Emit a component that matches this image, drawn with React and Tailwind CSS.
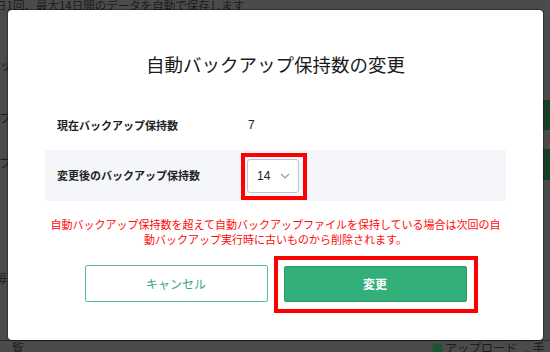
import React, { useState } from 'react';

const jp = { fontFamily: '"Noto Sans CJK JP", "Noto Sans", sans-serif' };

const BackgroundPage = () => (
  <>
    <p className="absolute left-[-5px] top-[-3px] text-[11.5px] leading-[16px] text-[#1c1c1c] whitespace-nowrap">
      日1回、最大14日間のデータを自動で保存します
    </p>
    <span className="absolute left-[0px] top-[57px] text-[12px] leading-[16px] text-[#1c1c1c]">ッ</span>
    <span className="absolute left-[-1px] top-[110px] text-[12px] leading-[16px] text-[#1c1c1c]">フ</span>
    <span className="absolute left-[-1px] top-[155px] text-[12px] leading-[16px] text-[#1c1c1c]">フ</span>
    <span className="absolute left-[-5px] top-[270px] text-[12px] leading-[16px] text-[#1c1c1c]">毎</span>
    <div className="absolute right-0 top-[100px] w-[30px] h-[30px] bg-[#173f26]" />
    <div className="absolute right-0 top-[149px] w-[30px] h-[31px] bg-[#173f26]" />
    <div className="absolute left-0 right-0 top-[340px] h-[1px] bg-[#2a2a2a]" />
    <span className="absolute left-[12px] top-[340px] text-[12px] leading-[16px] text-[#1c1c1c]">覧</span>
    <div className="absolute left-[432px] top-[341px] flex items-center gap-[2px]">
      <span className="w-[11px] h-[11px] rounded-full bg-[#1d5432]" />
      <span className="text-[12px] leading-[14px] text-[#1c1c1c]">アップロード</span>
    </div>
    <div className="absolute left-[523px] top-[341px] flex items-center gap-[2px]">
      <span className="w-[11px] h-[11px] rounded-full bg-[#1d5432]" />
      <span className="text-[12px] leading-[14px] text-[#1c1c1c]">手動</span>
    </div>
  </>
);

const App = () => {
  const [count, setCount] = useState('14');

  return (
    <div className="relative w-[550px] h-[352px] overflow-hidden bg-[#4b4b4b]" style={jp}>
      <BackgroundPage />
      <div className="absolute left-[8px] top-[10px] w-[535px] h-[330px] bg-white rounded-[4px] shadow-[0_0_1px_1px_rgba(0,0,0,0.35)] flex flex-col items-center">
        <h2 className="pt-[41px] text-[18.5px] leading-[26px] font-normal text-[#1a1a1a]">
          自動バックアップ保持数の変更
        </h2>

        <div className="mt-[23px] w-[461px]">
          <div className="h-[50px] flex items-center px-[12px]">
            <span className="w-[191px] text-[11px] font-bold text-[#222]">現在バックアップ保持数</span>
            <span className="text-[12px] text-[#222]" style={{ fontFamily: '"Liberation Sans", sans-serif' }}>7</span>
          </div>
          <div className="h-[51px] flex items-center px-[12px] bg-[#f5f6fa]">
            <span className="w-[190px] text-[11px] font-bold text-[#222]">変更後のバックアップ保持数</span>
            <div className="relative">
              <div className="w-[52px] h-[34px] bg-white border border-[#b9c5d6] rounded-[3px] flex items-center justify-between pl-[9px] pr-[8px]">
                <span className="text-[12px] text-[#222]" style={{ fontFamily: '"Liberation Sans", sans-serif' }}>{count}</span>
                <svg width="10" height="6" viewBox="0 0 10 6" fill="none">
                  <polyline points="1,1 5,5 9,1" stroke="#8d9cb4" strokeWidth="1.2" />
                </svg>
              </div>
              <div className="absolute -left-[6px] -top-[6px] -right-[8px] -bottom-[7px] border-[4px] border-[#ff0000] pointer-events-none" />
            </div>
          </div>
        </div>

        <p className="mt-[16px] w-[456px] text-center text-[11px] leading-[14.5px] text-[#ff0a0a]">
          自動バックアップ保持数を超えて自動バックアップファイルを保持している場合は次回の自動バックアップ実行時に古いものから削除されます。
        </p>

        <div className="mt-[19px] flex gap-[16px]">
          <button className="w-[183px] h-[37px] border border-[#59c095] rounded-[2px] bg-white text-[12px] text-[#3ba878]">
            キャンセル
          </button>
          <div className="relative">
            <button
              onClick={() => setCount(count)}
              className="w-[183px] h-[36px] mt-[1px] border border-[#2a9c69] rounded-[2px] bg-[#33b07a] text-[12px] font-bold text-white"
            >
              変更
            </button>
            <div className="absolute -left-[10px] -top-[9px] -right-[11px] -bottom-[11px] border-[4px] border-[#ff0000] pointer-events-none" />
          </div>
        </div>
      </div>
    </div>
  );
};

export default App;
